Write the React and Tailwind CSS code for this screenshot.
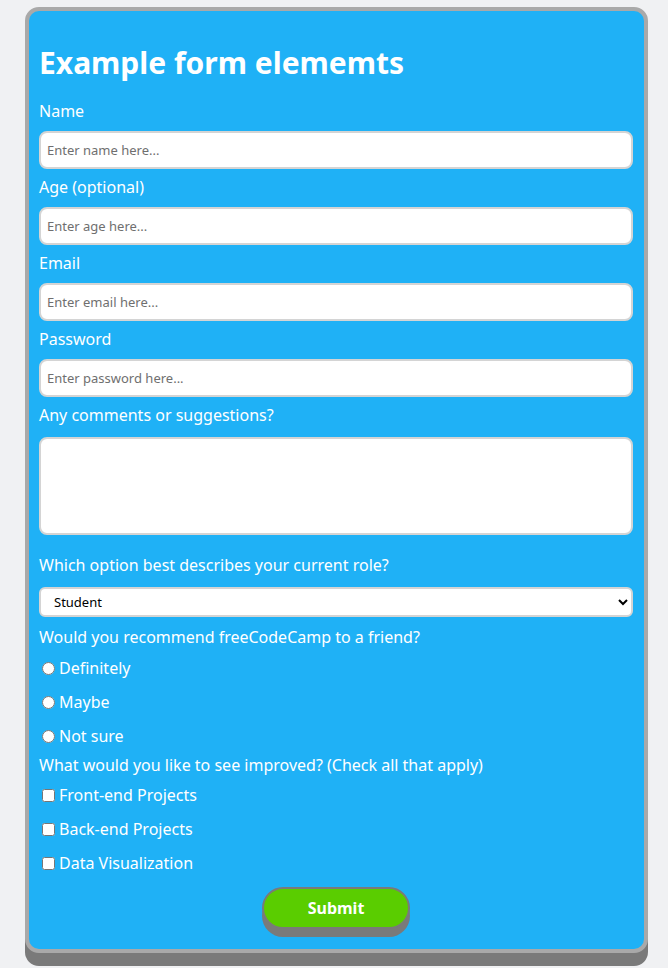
export default function App() {
  const fields = [
    { label: "Name", type: "text", placeholder: "Enter name here..." },
    { label: "Age (optional)", type: "number", placeholder: "Enter age here..." },
    { label: "Email", type: "email", placeholder: "Enter email here..." },
    { label: "Password", type: "password", placeholder: "Enter password here..." },
  ];
  const radios = ["Definitely", "Maybe", "Not sure"];
  const checks = ["Front-end Projects", "Back-end Projects", "Data Visualization"];

  return (
    <div className="min-h-[968px] bg-[#f0f1f3] pl-[25px] pr-[20px] pt-[7px] font-['Noto_Sans',sans-serif]">
      <form className="rounded-[14px] border-4 border-[#a9a9a9] bg-[#1fb1f6] pl-[10px] pr-[11px] pt-[33px] pb-[20px] text-white shadow-[0_13px_0_0_#7a7a7a]">
        <h1 className="text-[30px] font-bold leading-[38px] mb-[19px]">Example form elememts</h1>

        {fields.map((f) => (
          <div key={f.label} className="mb-[8px]">
            <label className="block text-[16px] leading-[20px] mb-[10px]">{f.label}</label>
            <input
              type={f.type}
              placeholder={f.placeholder}
              className="block w-full h-[38px] rounded-lg border-2 border-[#d4d4d4] bg-white px-[6px] text-[13px] text-black placeholder:text-[#6f6f6f]"
            />
          </div>
        ))}

        <label className="block text-[16px] leading-[20px] mb-[12px]">Any comments or suggestions?</label>
        <textarea className="block w-full h-[98px] resize-none rounded-lg border-2 border-[#d4d4d4] bg-white mb-[20px]" />

        <label className="block text-[16px] leading-[20px] mb-[12px]">Which option best describes your current role?</label>
        <select className="block w-full h-[30px] rounded-md border-2 border-[#d4d4d4] bg-white px-[9px] text-[13px] text-black mb-[10px]">
          <option>Student</option>
          <option>Full-time job</option>
          <option>Prefer not to say</option>
        </select>

        <p className="text-[16px] leading-[20px] mb-[4px]">Would you recommend freeCodeCamp to a friend?</p>
        {radios.map((r) => (
          <label key={r} className="flex items-center h-[34px] pl-[3px] text-[16px]">
            <input type="radio" name="recommend" className="m-0 mr-[4px] h-[13px] w-[13px]" />
            {r}
          </label>
        ))}

        <p className="text-[16px] leading-[20px] mt-[2px] mb-[3px]">What would you like to see improved? (Check all that apply)</p>
        {checks.map((c) => (
          <label key={c} className="flex items-center h-[34px] pl-[3px] text-[16px]">
            <input type="checkbox" className="m-0 mr-[4px] h-[13px] w-[13px]" />
            {c}
          </label>
        ))}

        <div className="flex justify-center mt-[7px]">
          <button
            type="button"
            className="w-[148px] h-[42px] rounded-full border-2 border-[#7a7a7a] bg-[#5acd00] text-[16px] font-bold text-white shadow-[0_8px_0_0_#7a7a7a]"
          >
            Submit
          </button>
        </div>
      </form>
    </div>
  );
}
